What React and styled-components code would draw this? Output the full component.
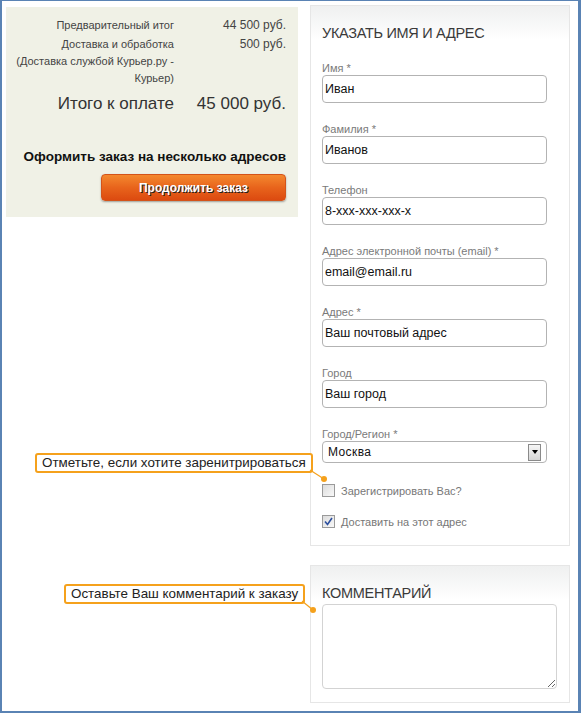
import React from "react";
import styled, { createGlobalStyle } from "styled-components";

const GlobalStyle = createGlobalStyle`
  html, body {
    margin: 0;
    padding: 0;
    background: #fff;
  }
  body {
    font-family: "Liberation Sans", Arial, sans-serif;
  }
`;

const Frame = styled.div`
  position: relative;
  width: 581px;
  height: 713px;
  box-sizing: border-box;
  border-style: solid;
  border-color: #5a83b4;
  border-width: 1px 3px 2px 2px;
  padding: 4px 0 0 4px;
  display: flex;
  align-items: flex-start;
  gap: 12px;
  background: #fff;
`;

const Summary = styled.div`
  margin-top: 2px;
  width: 292px;
  box-sizing: border-box;
  background: #f0f1e6;
  padding: 10px 12px 16px 4px;
  display: flex;
  flex-direction: column;
`;

const SumGrid = styled.div`
  display: grid;
  grid-template-columns: 1fr 112px;
  row-gap: 2px;
  font-size: 11px;
  line-height: 17px;
  color: #444;
`;

const SumLabel = styled.div`
  text-align: right;
`;

const SumValue = styled.div`
  text-align: right;
  font-size: 12px;
`;

const Note = styled.span`
  display: block;
`;

const TotalRow = styled.div`
  display: grid;
  grid-template-columns: 1fr 112px;
  margin-top: 7px;
  font-size: 17px;
  line-height: 20px;
  color: #333;
  text-align: right;
`;

const MultiTitle = styled.div`
  margin-top: 35px;
  text-align: right;
  font-size: 13.5px;
  line-height: 16px;
  font-weight: bold;
  color: #111;
`;

const OrderButton = styled.button`
  align-self: flex-end;
  margin-top: 9px;
  width: 185px;
  height: 27px;
  border: 1px solid #d4531a;
  border-radius: 4px;
  background: linear-gradient(#f4882f, #e8641c 50%, #dc4a10);
  box-shadow: 0 1px 2px rgba(0, 0, 0, 0.35);
  color: #fff;
  font-family: "Liberation Sans", Arial, sans-serif;
  font-size: 12px;
  font-weight: bold;
  text-shadow: 1px 1px 0 #222;
  cursor: pointer;
`;

const RightCol = styled.div`
  width: 260px;
  display: flex;
  flex-direction: column;
  gap: 19px;
`;

const Panel = styled.div`
  border: 1px solid #e6e6e6;
  background: linear-gradient(#eff0f0, #ffffff 34px);
  padding: ${(p) => p.$top}px 12px ${(p) => p.$bottom}px 11px;
  display: flex;
  flex-direction: column;
`;

const PanelTitle = styled.h2`
  margin: 0;
  font-size: 14.5px;
  line-height: 18px;
  font-weight: normal;
  letter-spacing: -0.3px;
  color: #3a3a3a;
`;

const Fields = styled.div`
  margin-top: 19px;
  display: flex;
  flex-direction: column;
  gap: 19px;
`;

const Field = styled.div`
  display: flex;
  flex-direction: column;
`;

const Label = styled.label`
  font-size: 11px;
  line-height: 14px;
  color: #7a7a7a;
`;

const TextInput = styled.input`
  width: 225px;
  height: 28px;
  box-sizing: border-box;
  border: 1px solid #b3b3b3;
  border-radius: 4px;
  padding: 0 2px;
  font-family: "Liberation Sans", Arial, sans-serif;
  font-size: 12.5px;
  color: #111;
  background: #fff;
  outline: none;
`;

const SelectBox = styled.div`
  width: 225px;
  height: 22px;
  box-sizing: border-box;
  border: 1px solid #b3b3b3;
  border-radius: 4px;
  display: flex;
  align-items: center;
  justify-content: space-between;
  padding: 0 5px 0 5px;
  font-size: 12px;
  letter-spacing: 0.4px;
  color: #111;
  background: #fff;
`;

const SelectArrow = styled.span`
  width: 13px;
  height: 17px;
  box-sizing: border-box;
  border: 1px solid #8a8a8a;
  background: linear-gradient(#f6f6f6, #d6d6d6);
  display: flex;
  align-items: center;
  justify-content: center;

  &::after {
    content: "";
    border-left: 3px solid transparent;
    border-right: 3px solid transparent;
    border-top: 4px solid #000;
  }
`;

const Checks = styled.div`
  margin-top: 21px;
  display: flex;
  flex-direction: column;
  gap: 18px;
`;

const CheckRow = styled.div`
  display: flex;
  align-items: center;
  gap: 6px;
  height: 13px;
  font-size: 11px;
  color: #777;
`;

const CheckBox = styled.span`
  width: 13px;
  height: 13px;
  box-sizing: border-box;
  border: 1px solid #9a9a9a;
  background: linear-gradient(135deg, #dcdcdc, #f8f8f8);
  display: flex;
  align-items: center;
  justify-content: center;
`;

const CommentArea = styled.textarea`
  margin-top: 2px;
  width: 235px;
  height: 85px;
  box-sizing: border-box;
  border: 1px solid #d3d3d3;
  border-radius: 4px;
  font-family: "Liberation Sans", Arial, sans-serif;
  font-size: 13px;
  outline: none;
`;

const Callout = styled.div`
  position: absolute;
  left: ${(p) => p.$left}px;
  top: ${(p) => p.$top}px;
  height: 20px;
  box-sizing: border-box;
  border: 2px solid #f5a11c;
  border-radius: 3px;
  background: #fff;
  padding: 0 5px;
  font-size: 13.4px;
  line-height: 16px;
  color: #222;
  white-space: nowrap;
`;

const Connector = styled.svg`
  position: absolute;
  left: 100%;
  top: 100%;
  overflow: visible;
`;

const Pointer = ({ dx, dy }) => (
  <Connector width={dx + 4} height={dy + 4}>
    <line x1="-1" y1="-1" x2={dx} y2={dy} stroke="#f5a11c" strokeWidth="1.2" />
    <circle cx={dx} cy={dy} r="3" fill="#f5a11c" />
  </Connector>
);

const Check = () => (
  <svg width="9" height="9" viewBox="0 0 9 9">
    <path d="M1 4.5 L3.5 7.5 L8 1" fill="none" stroke="#2c4f9e" strokeWidth="1.6" />
  </svg>
);

const fields = [
  { label: "Имя *", value: "Иван" },
  { label: "Фамилия *", value: "Иванов" },
  { label: "Телефон", value: "8-xxx-xxx-xxx-x" },
  { label: "Адрес электронной почты (email) *", value: "email@email.ru" },
  { label: "Адрес *", value: "Ваш почтовый адрес" },
  { label: "Город", value: "Ваш город" },
];

export default function App() {
  return (
    <>
      <GlobalStyle />
      <Frame>
        <Summary>
          <SumGrid>
            <SumLabel>Предварительный итог</SumLabel>
            <SumValue>44 500 руб.</SumValue>
            <SumLabel>
              Доставка и обработка
              <Note>(Доставка службой Курьер.ру - Курьер)</Note>
            </SumLabel>
            <SumValue>500 руб.</SumValue>
          </SumGrid>
          <TotalRow>
            <div>Итого к оплате</div>
            <div>45 000 руб.</div>
          </TotalRow>
          <MultiTitle>Оформить заказ на несколько адресов</MultiTitle>
          <OrderButton>Продолжить заказ</OrderButton>
        </Summary>

        <RightCol>
          <Panel $top={18} $bottom={17}>
            <PanelTitle>УКАЗАТЬ ИМЯ И АДРЕС</PanelTitle>
            <Fields>
              {fields.map((f) => (
                <Field key={f.label}>
                  <Label>{f.label}</Label>
                  <TextInput defaultValue={f.value} />
                </Field>
              ))}
              <Field>
                <Label>Город/Регион *</Label>
                <SelectBox>
                  <span>Москва</span>
                  <SelectArrow />
                </SelectBox>
              </Field>
            </Fields>
            <Checks>
              <CheckRow>
                <CheckBox />
                Зарегистрировать Вас?
              </CheckRow>
              <CheckRow>
                <CheckBox>
                  <Check />
                </CheckBox>
                Доставить на этот адрес
              </CheckRow>
            </Checks>
          </Panel>

          <Panel $top={18} $bottom={13}>
            <PanelTitle>КОММЕНТАРИЙ</PanelTitle>
            <CommentArea />
          </Panel>
        </RightCol>

        <Callout $left={33} $top={452}>
          Отметьте, если хотите заренитрироваться
          <Pointer dx={13} dy={8} />
        </Callout>
        <Callout $left={62} $top={583}>
          Оставьте Ваш комментарий к заказу
          <Pointer dx={10} dy={8} />
        </Callout>
      </Frame>
    </>
  );
}
